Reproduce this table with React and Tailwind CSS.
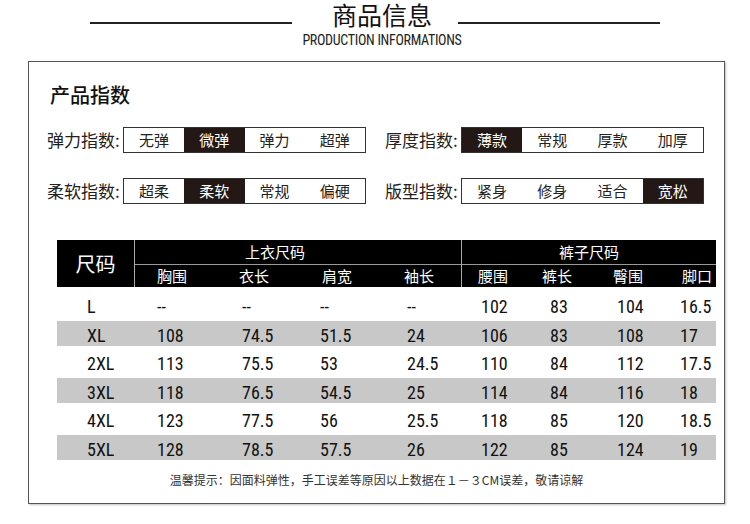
const cjk = { fontFamily: "'Noto Sans CJK SC', 'Noto Sans', sans-serif" };

const indexGroups = [
  [
    { label: "弹力指数", items: ["无弹", "微弹", "弹力", "超弹"], active: 1 },
    { label: "厚度指数", items: ["薄款", "常规", "厚款", "加厚"], active: 0 },
  ],
  [
    { label: "柔软指数", items: ["超柔", "柔软", "常规", "偏硬"], active: 1 },
    { label: "版型指数", items: ["紧身", "修身", "适合", "宽松"], active: 3 },
  ],
];

const sizes = [
  ["L", "--", "--", "--", "--", "102", "83", "104", "16.5"],
  ["XL", "108", "74.5", "51.5", "24", "106", "83", "108", "17"],
  ["2XL", "113", "75.5", "53", "24.5", "110", "84", "112", "17.5"],
  ["3XL", "118", "76.5", "54.5", "25", "114", "84", "116", "18"],
  ["4XL", "123", "77.5", "56", "25.5", "118", "85", "120", "18.5"],
  ["5XL", "128", "78.5", "57.5", "26", "122", "85", "124", "19"],
];

function IndexRow({ label, items, active }) {
  return (
    <div className="flex items-center">
      <div className="w-[76px] text-[17px] leading-[26px] text-[#222] whitespace-nowrap" style={cjk}>
        {label}:
      </div>
      <div className="flex w-[243px] h-[26px] border border-[#333]">
        {items.map((it, i) => (
          <div
            key={it}
            className={
              i === active
                ? "flex-1 flex items-center justify-center bg-[#231815] text-white text-[15px]"
                : "flex-1 flex items-center justify-center text-[#222] text-[15px]"
            }
            style={cjk}
          >
            {it}
          </div>
        ))}
      </div>
    </div>
  );
}

export default function App() {
  return (
    <div className="w-[750px] h-[524px] bg-white overflow-hidden" style={cjk}>
      {/* title */}
      <div className="flex items-start pl-[90px]">
        <div className="w-[202px] h-[2px] bg-[#222] mt-[22px]"></div>
        <div className="ml-[40px] w-[100px] text-[25px] leading-[28px] text-[#111] text-center">商品信息</div>
        <div className="ml-[26px] w-[202px] h-[2px] bg-[#222] mt-[22px]"></div>
      </div>
      <div
        className="mt-[4px] ml-[297px] w-[170px] text-[14px] leading-[16px] text-[#222] text-center whitespace-nowrap tracking-[-0.3px]"
        style={{ fontFamily: "'Liberation Sans Narrow', 'Roboto Condensed', 'Liberation Sans', sans-serif" }}
      >
        PRODUCTION INFORMATIONS
      </div>

      {/* main box */}
      <div className="ml-[28px] mt-[13px] w-[697px] h-[443px] border border-[#555] shadow-[1px_1px_2px_rgba(0,0,0,0.25)]">
        <div className="ml-[21px] mt-[19px] text-[20px] leading-[28px] text-[#111] font-medium">产品指数</div>

        <div className="mt-[18px] ml-[18px] flex flex-col gap-[25px]">
          {indexGroups.map((row, r) => (
            <div key={r} className="flex gap-[19px]">
              {row.map((g) => (
                <IndexRow key={g.label} {...g} />
              ))}
            </div>
          ))}
        </div>

        {/* size table */}
        <div className="ml-[28px] mt-[36px] w-[659px]">
          <div className="flex h-[47px] bg-black text-white">
            <div className="w-[78px] flex items-center justify-center text-[20px] border-r border-[#aaa]">尺码</div>
            <div className="w-[327px] flex flex-col border-r border-[#aaa]">
              <div className="h-[25px] pl-[110px] flex items-center text-[15px] border-b border-[#999]">上衣尺码</div>
              <div className="flex-1 pl-[22px] grid grid-cols-[82px_83px_82px_1fr] items-center text-[15px]">
                <span>胸围</span>
                <span>衣长</span>
                <span>肩宽</span>
                <span>袖长</span>
              </div>
            </div>
            <div className="flex-1 flex flex-col">
              <div className="h-[25px] flex items-center justify-center text-[15px] border-b border-[#999]">裤子尺码</div>
              <div className="flex-1 pl-[16px] grid grid-cols-[64px_71px_69px_1fr] items-center text-[15px]">
                <span>腰围</span>
                <span>裤长</span>
                <span>臀围</span>
                <span>脚口</span>
              </div>
            </div>
          </div>

          <div
            className="mt-[5px] flex flex-col gap-[3.5px] text-[18px] text-[#111]"
            style={{ fontFamily: "'Liberation Sans Narrow', 'Roboto Condensed', 'Noto Sans', sans-serif" }}
          >
            {sizes.map((row, i) => (
              <div
                key={row[0]}
                className={
                  i % 2 === 1
                    ? "h-[25px] bg-[#c8c8c8] grid grid-cols-[100px_85px_78px_87px_74px_69px_67px_63px_1fr] items-center"
                    : "h-[25px] grid grid-cols-[100px_85px_78px_87px_74px_69px_67px_63px_1fr] items-center"
                }
              >
                {row.map((c, j) => (
                  <span key={j} className={j === 0 ? "pl-[30px] pt-[1px]" : "pt-[1px]"}>
                    {c}
                  </span>
                ))}
              </div>
            ))}
          </div>
        </div>

        <div className="mt-[11px] text-center text-[12px] text-[#333]">
          温馨提示：因面料弹性，手工误差等原因以上数据在１－３CM误差，敬请谅解
        </div>
      </div>
    </div>
  );
}
